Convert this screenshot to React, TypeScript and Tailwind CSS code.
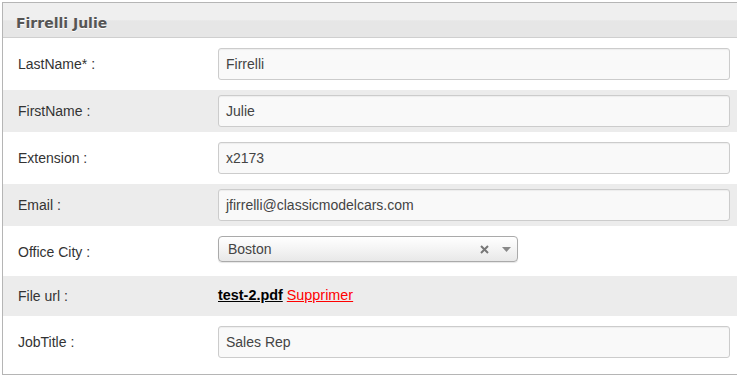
import React from "react";

const font = { fontFamily: '"Liberation Sans", Arial, sans-serif' };

function TextRow({ label, value, gray }: { label: string; value: string; gray?: boolean }) {
  return (
    <div className={`flex items-center pl-[15px] ${gray ? "bg-[#ececec] h-[42px]" : "bg-white h-[52px]"}`}>
      <div className="w-[200px] text-[14px] text-[#333]">{label}</div>
      <div className="w-[512px] h-[32px] border border-[#cccccc] rounded-[3px] bg-[#f9f9f9] shadow-[inset_0_1px_1px_rgba(0,0,0,0.05)] flex items-center px-[7px] text-[14px] text-[#444]">
        {value}
      </div>
    </div>
  );
}

export default function App() {
  return (
    <div className="w-[737px] h-[377px] overflow-hidden bg-white" style={font}>
      <div className="pl-[2px] pt-[2px]">
        <div className="w-[760px] border border-[#b5b5b5] bg-white pb-[6px]">
          <div className="h-[35px] border-b border-[#cfcfcf] bg-[linear-gradient(to_bottom,#efefef_0%,#efefef_50%,#e6e6e6_52%,#e6e6e6_100%)] flex items-center pl-[13px] pt-[6px]">
            <span className="text-[14px] font-bold text-[#555] [text-shadow:0_1px_0_#fff] [font-family:'DejaVu_Sans',sans-serif]">Firrelli Julie</span>
          </div>
          <TextRow label="LastName* :" value="Firrelli" />
          <TextRow label="FirstName :" value="Julie" gray />
          <TextRow label="Extension :" value="x2173" />
          <TextRow label="Email :" value="jfirrelli@classicmodelcars.com" gray />
          <div className="flex items-start pl-[15px] bg-white h-[50px] pt-[10px]">
            <div className="w-[200px] h-[26px] flex items-center text-[14px] text-[#333] mt-[3px]">Office City :</div>
            <div className="w-[300px] h-[26px] border border-[#aaaaaa] rounded-[4px] bg-[linear-gradient(to_bottom,#ffffff_0%,#f4f4f4_50%,#e8e8e8_100%)] shadow-[0_1px_1px_rgba(0,0,0,0.1)] flex items-center pl-[9px] pr-[6px] text-[14px] text-[#444]">
              <span className="flex-1">Boston</span>
              <svg width="9" height="9" viewBox="0 0 9 9" className="mr-[13px]">
                <path d="M1 1 L8 8 M8 1 L1 8" stroke="#777" strokeWidth="2" />
              </svg>
              <svg width="9" height="5" viewBox="0 0 9 5">
                <path d="M0 0 L9 0 L4.5 5 Z" fill="#888" />
              </svg>
            </div>
          </div>
          <div className="flex items-center pl-[15px] bg-[#ececec] h-[40px]">
            <div className="w-[200px] text-[14px] text-[#333]">File url :</div>
            <div className="text-[14.4px]">
              <a className="font-bold text-black underline">test-2.pdf</a>{" "}
              <a className="text-[#ff0000] underline">Supprimer</a>
            </div>
          </div>
          <TextRow label="JobTitle :" value="Sales Rep" />
        </div>
      </div>
    </div>
  );
}
